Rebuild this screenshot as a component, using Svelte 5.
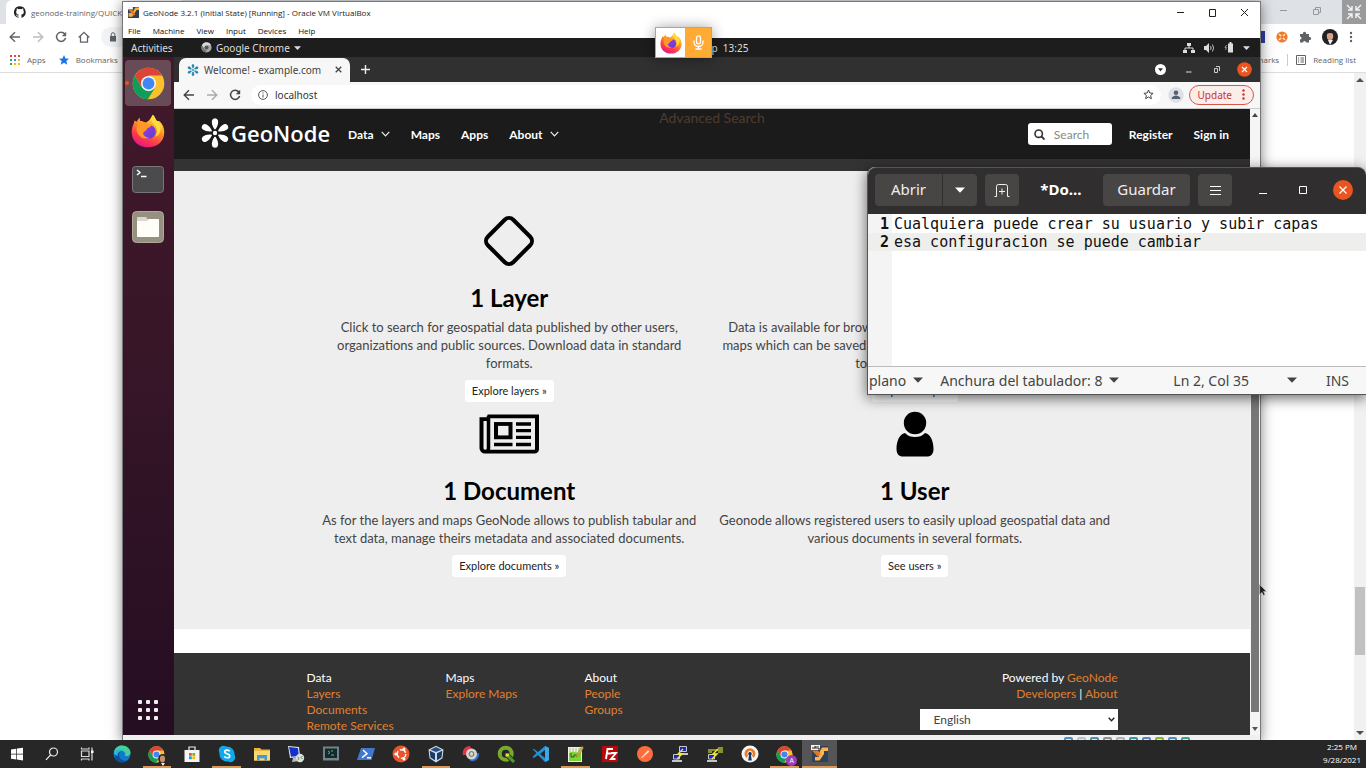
<script>
  const tasks = [
    { id: 'start', label: 'Start' },
    { id: 'search', label: 'Search' },
    { id: 'taskview', label: 'Task View' },
    { id: 'edge', label: 'Microsoft Edge' },
    { id: 'chromeuser', label: 'Google Chrome', running: true },
    { id: 'store', label: 'Microsoft Store' },
    { id: 'skype', label: 'Skype', running: true },
    { id: 'explorer', label: 'File Explorer' },
    { id: 'remote', label: 'Remote Desktop' },
    { id: 'monitor', label: 'Console' },
    { id: 'powershell', label: 'PowerShell' },
    { id: 'ubuntu', label: 'Ubuntu' },
    { id: 'vbox', label: 'VirtualBox', running: true },
    { id: 'sync', label: 'Disk sync' },
    { id: 'qgis', label: 'QGIS' },
    { id: 'code', label: 'Visual Studio Code' },
    { id: 'notepad', label: 'Notepad++', running: true },
    { id: 'filezilla', label: 'FileZilla' },
    { id: 'postman', label: 'Postman' },
    { id: 'putty', label: 'PuTTY' },
    { id: 'puttygen', label: 'PuTTYgen' },
    { id: 'openvpn', label: 'OpenVPN' },
    { id: 'chromea', label: 'Google Chrome, second profile', running: true },
    { id: 'vm', label: 'GeoNode 3.2.1', running: true, active: true }
  ];

  const features = [
    {
      icon: 'layer', title: '1 Layer', action: 'Explore layers »',
      text: 'Click to search for geospatial data published by other users, organizations and public sources. Download data in standard formats.'
    },
    {
      icon: 'map', title: '0 Maps', action: 'Explore maps »',
      text: 'Data is available for browsing, aggregating and styling to generate maps which can be saved, downloaded, shared publicly or restricted to specify users only.'
    },
    {
      icon: 'document', title: '1 Document', action: 'Explore documents »',
      text: 'As for the layers and maps GeoNode allows to publish tabular and text data, manage theirs metadata and associated documents.'
    },
    {
      icon: 'user', title: '1 User', action: 'See users »',
      text: 'Geonode allows registered users to easily upload geospatial data and various documents in several formats.'
    }
  ];

  const footerColumns = [
    { title: 'Data', links: ['Layers', 'Documents', 'Remote Services'] },
    { title: 'Maps', links: ['Explore Maps'] },
    { title: 'About', links: ['People', 'Groups'] }
  ];

  const lines = [
    'Cualquiera puede crear su usuario y subir capas',
    'esa configuracion se puede cambiar'
  ];
  const currentLine = 1;
  const petals = [0, 60, 120, 180, 240, 300];
  const appDots = ['#ea4335', '#ea4335', '#ea4335', '#34a853', '#4285f4', '#fbbc04', '#34a853', '#fbbc04', '#fbbc04'];
  const statusColors = ['#4d8fc4', '#b9c3cc', '#4a90a8', '#8d9297', '#aeb5bb', '#2f9aa6', '#5a83c9', '#7eb62e', '#4d8fc4', '#3ba08f'];
</script>

{#snippet chrome(size)}
  <svg width={size} height={size} viewBox="0 0 48 48" aria-hidden="true">
    <circle cx="24" cy="24" r="23" fill="#fbc02d" />
    <path d="M24 24 14 29.8 4.1 12.5A23 23 0 0 1 43.9 12.5H24z" fill="#dc4437" />
    <path d="M4.1 12.5 14 29.8 24 35.5 21.5 47A23 23 0 0 1 4.1 12.5z" fill="#109d58" />
    <path d="M14 29.8 24 35.5 33 31 23 47h-2A23 23 0 0 1 12 43z" fill="#109d58" />
    <circle cx="24" cy="24" r="11" fill="#f3f3f3" />
    <circle cx="24" cy="24" r="8.6" fill="#4385f4" />
  </svg>
{/snippet}

{#snippet firefox(size)}
  <svg width={size} height={size} viewBox="0 0 48 48" aria-hidden="true">
    <defs>
      <linearGradient id="ffbody" x1=".8" y1="0" x2=".3" y2="1">
        <stop offset="0" stop-color="#fff44f" /><stop offset=".4" stop-color="#ff9a1f" />
        <stop offset=".75" stop-color="#ff3750" /><stop offset="1" stop-color="#e31587" />
      </linearGradient>
      <linearGradient id="ffglobe" x1="0" y1="0" x2="1" y2="1">
        <stop offset="0" stop-color="#a238e0" /><stop offset="1" stop-color="#5a3fd0" />
      </linearGradient>
    </defs>
    <path d="M31 1c3 3 4 6 5 9 2 0 4-1 5 1 4 4 6 9 6 15 0 12-10 21-23 21S1 38 1 26c0-5 1-9 3-13l1-4 3 2 4-6 1 5c3 0 5 1 7 2 5-1 8-6 11-11z" fill="url(#ffbody)" />
    <circle cx="25" cy="25" r="10" fill="url(#ffglobe)" />
    <path d="M10 12c5-2 10-1 13 2l6 1c0 3-4 4-6 5-1 4-5 4-6 7 1 4 5 7 9 6-9 5-18-3-18-11 0-4 1-7 2-10z" fill="#ff9826" />
    <path d="M31 1c-5 6-2 10 2 14 5 5 5 12 1 17 7-2 9-9 7-15 2 2 3 4 3 7 2-9-10-14-13-23z" fill="#ffdd3a" />
  </svg>
{/snippet}

{#snippet star6(size, color)}
  <svg width={size} height={size} viewBox="0 0 30 30" aria-hidden="true">
    {#each petals as angle}
      <path d="M15 10.5C13 7.500 12.400 5 12.700 3 13 1.400 14 1 15 1s2 .4 2.300 2C17.600 5 17 7.500 15 10.500z" fill={color} stroke={color} stroke-width="1.600" stroke-linejoin="round" transform="rotate({angle} 15 15)" />
    {/each}
    <circle cx="15" cy="15" r="2.2" fill={color} />
  </svg>
{/snippet}

{#snippet arrow(direction, color)}
  <svg width="12" height="12" viewBox="0 0 12 12" fill="none" stroke={color} stroke-width="1.400" aria-hidden="true">
    {#if direction === 'back'}<path d="M11 6H1.500M6 1.200 1.200 6 6 10.800" />{:else}<path d="M1 6h9.500M6 1.200 10.800 6 6 10.800" />{/if}
  </svg>
{/snippet}

{#snippet reload(color)}
  <svg width="12" height="12" viewBox="0 0 12 12" aria-hidden="true">
    <path d="M9.800 3A4.600 4.600 0 1 0 10.600 7" fill="none" stroke={color} stroke-width="1.500" />
    <path d="M11.200.800v4.400H6.800z" fill={color} />
  </svg>
{/snippet}

{#snippet caret(color, width)}
  <svg {width} height="6" viewBox="0 0 10 6" aria-hidden="true"><path d="M0 .5h10L5 5.700z" fill={color} /></svg>
{/snippet}

{#snippet feature(name)}
  {#if name === 'layer'}
    <svg width="52" height="52" viewBox="0 0 52 52" aria-hidden="true">
      <rect x="8" y="8" width="36" height="36" rx="6" transform="rotate(45 26 26)" fill="none" stroke="#000" stroke-width="4" />
    </svg>
  {:else if name === 'map'}
    <svg width="52" height="52" viewBox="0 0 52 52" aria-hidden="true">
      <path d="M26 48C16 31 11 25 11 18a15 15 0 0 1 30 0c0 7-5 13-15 30zm0-23a7 7 0 1 0 0-14 7 7 0 0 0 0 14z" fill="#000" />
    </svg>
  {:else if name === 'document'}
    <svg width="60" height="42" viewBox="0 0 60 44" preserveAspectRatio="none" fill="none" stroke="#000" aria-hidden="true">
      <path d="M8.500 3.500H58V38a2.500 2.500 0 0 1-2.500 2.500H6A3.500 3.500 0 0 1 2.500 37V6.500h6" stroke-width="4" />
      <path d="M9.500 3v34a3.500 3.500 0 0 1-3.500 3.500" stroke-width="3.500" />
      <rect x="17" y="11.500" width="14.500" height="14" stroke-width="4" />
      <path d="M37 11.500h15M37 18.500h15M37 25.500h15M37 33h15M15 33h18.500" stroke-width="3.500" />
    </svg>
  {:else}
    <svg width="38" height="46" viewBox="0 0 38 46" aria-hidden="true">
      <circle cx="19" cy="12" r="11.200" />
      <path d="M9 22c3 3 6 4 10 4s7-1 10-4c6 1 8.500 9 8.500 16 0 5-2.500 7.500-6.500 7.500H7C3 45.500.500 43 .500 38 .500 31 3 23 9 22z" />
    </svg>
  {/if}
{/snippet}

{#snippet task(id)}
  {#if id === 'chromeuser' || id === 'chromea'}
    <span class="stack">
      {@render chrome(17)}
      {#if id === 'chromea'}<b class="badge">A</b>{:else}
        <svg class="mini" width="11" height="12" viewBox="0 0 11 12" aria-hidden="true"><path d="M1 12 2 8C0 3 2 0 6 0s5 3 3 8l2 4z" fill="#282425" /><ellipse cx="5.500" cy="5" rx="2.600" ry="3.400" fill="#c78f72" /><path d="m4 9 2 3 2-3z" fill="#eee" /></svg>
      {/if}
    </span>
  {:else}
    <svg width="18" height="18" viewBox="0 0 18 18" aria-hidden="true">
      {#if id === 'start'}
        <path d="M3 4.500 8.300 3.700v5H3zM9 3.600l6-.9v6H9zM3 9.400h5.300v5L3 13.700zM9 9.400h6v6l-6-.9z" fill="#fff" />
      {:else if id === 'search'}
        <circle cx="10.500" cy="7" r="4" fill="none" stroke="#eee" stroke-width="1.200" /><path d="m7.700 9.900-4.700 5" stroke="#eee" stroke-width="1.300" />
      {:else if id === 'taskview'}
        <path d="M3.500 6h7.500v5.500H3.500zM3.500 2.500v1.500H11V2.500M3.500 15.500V14H11v1.500M14 2.500v13" fill="none" stroke="#ddd" stroke-width="1.200" /><path d="M13 5.500h2.500V8H13z" fill="#fff" />
      {:else if id === 'edge'}
        <circle cx="9" cy="9" r="8.500" fill="#1179c9" />
        <path d="M1 7C2 2 6 .5 9 .5c5 0 8.500 3.500 8.500 7 0 3-3 4-5 3.500-1-.5-1-1 0-2C12 5 5 4 1 7z" fill="#45cf9a" />
        <path d="M7 7c-2 3-1 7 3 8.500 3 .6 5 0 6.500-2C13 18.500 5 19 2 13.500 1 9 4 6 7 7z" fill="#0c4f9b" />
        <path d="M1 7c3-3 8-3 9.500-1C8 5 4.500 7 4.500 11 2 10 .700 9 1 7z" fill="#2bb5d9" />
      {:else if id === 'store'}
        <path d="M1.500 5h15v12h-15z" fill="#f5f5f5" /><path d="M6 6V2h6v4" fill="none" stroke="#eee" stroke-width="1.200" />
        <path d="M6 8h2.800v2.800H6z" fill="#f25022" /><path d="M9.400 8h2.800v2.800H9.400z" fill="#7fba00" /><path d="M6 11.400h2.800v2.800H6z" fill="#00a4ef" /><path d="M9.400 11.400h2.800v2.800H9.400z" fill="#ffb900" />
      {:else if id === 'skype'}
        <circle cx="9" cy="9" r="7.600" fill="#11a8ea" /><circle cx="5.500" cy="5.500" r="4.700" fill="#11a8ea" /><circle cx="12.500" cy="12.500" r="4.700" fill="#11a8ea" />
        <path d="M11.700 6.300C10.800 4.700 6.700 4.600 6.700 6.900c0 2.400 5.100 1.500 5.100 4 0 2.400-4.500 2.300-5.500.5" fill="none" stroke="#fff" stroke-width="1.700" />
      {:else if id === 'explorer'}
        <path d="M1 3h6l1.500 1.500H17v11H1z" fill="#ecb53c" /><path d="M1 6h16v9.500H1z" fill="#fbd970" /><path d="M4 10h10v5.500h-2.500v-2.300h-5v2.300H4z" fill="#3f9bd8" />
      {:else if id === 'remote'}
        <path d="m1 1 11 1 1 10-10 1z" fill="#e6eaf0" /><path d="m2 2 9 1 .8 8L4 11.700z" fill="#1330c8" /><path d="m6 13 5-1 1 4-7 1z" fill="#b9bec4" /><circle cx="13" cy="13" r="4.200" fill="#dce1e0" /><path d="m10.500 12 1.700 1.500-1.700 1.500m5-4L14 12.500l1.500 1.500" stroke="#4a8a50" fill="none" />
      {:else if id === 'monitor'}
        <path d="M1 1.500h16v14H1z" fill="#75828a" /><path d="M3 3.500h12v9.500H3z" fill="#122a2d" /><path d="m6 6 2 1.500L6 9m3 1h3M9 6h2" stroke="#55bd7b" fill="none" />
      {:else if id === 'powershell'}
        <path d="M4 3h14l-3.500 12H0z" fill="#4178cc" /><path d="m6 5 4 3.700-5 4m5 0h4" stroke="#fff" stroke-width="1.500" fill="none" />
      {:else if id === 'ubuntu'}
        <circle cx="9" cy="9" r="8.500" fill="#e8542b" /><circle cx="9.500" cy="9" r="4.300" fill="none" stroke="#fff" stroke-width="1.500" stroke-dasharray="7 2" /><circle cx="3.800" cy="9" r="1.500" fill="#fff" /><circle cx="12" cy="4" r="1.500" fill="#fff" /><circle cx="12" cy="14" r="1.500" fill="#fff" />
      {:else if id === 'vbox'}
        <path d="m9 .7 7.500 3.700-1 8.800L9 17.500l-6.500-4.300-1-8.800z" fill="#c8dae8" /><path d="m9 2 5.500 2.700L9 7 3.500 4.700z" fill="#284d7c" /><path d="m2.700 5.800 5.300 2.500v7L3.500 12.500zM15.300 5.800 10 8.300v7l4.500-2.800z" fill="#183b68" />
      {:else if id === 'sync'}
        <path d="M1 10A7 7 0 0 1 8 1l2 4C7 5 5 7 5 10z" fill="#dc3745" /><path d="M17 8a7 7 0 0 1-9 8l1-3c4 1 5-1 5-5z" fill="#326fc7" /><circle cx="9.500" cy="9" r="5.500" fill="#d6d6d0" /><circle cx="9.500" cy="9" r="2.400" fill="none" stroke="#68655f" />
      {:else if id === 'qgis'}
        <circle cx="8.700" cy="8.700" r="6" fill="none" stroke="#77a92f" stroke-width="4" /><path d="m9 9 8 8" stroke="#27272a" stroke-width="5" /><path d="m10 10 7 7" stroke="#549331" stroke-width="3.200" /><path d="M8.500 8.500h4l-1 3h-3z" fill="#f4dd2c" />
      {:else if id === 'code'}
        <path d="m13 1 4 2v12l-4 2-7-7-4 3-1.500-1 4-4-4-4L2 4l4 3z" fill="#2392d5" /><path d="M13 5v8L8 9z" fill="#262628" /><path d="m13 1 4 2v12l-4 2z" fill="#3ba8ea" />
      {:else if id === 'notepad'}
        <path d="M2 2h14v15H2z" fill="#eff3df" /><path d="M3 8c5-3 8 1 12-1v9H3z" fill="#7bd532" /><path d="M3 4h12M3 6h12" stroke="#a4bd8e" stroke-dasharray="2 1" /><path d="m16 1-5 8-1 3 3-2 4.500-7z" fill="#d8ba43" stroke="#765e24" stroke-width=".5" /><path d="M5 8v4h3v-2h2" fill="none" stroke="#2e5724" />
      {:else if id === 'filezilla'}
        <path d="M1 1h16v16H1z" fill="#b80808" /><path d="M5 14 6.500 4H12M6 8.500h4.500M10 8h5l-5 6h4.500" fill="none" stroke="#fff" stroke-width="1.900" />
      {:else if id === 'postman'}
        <circle cx="9" cy="9" r="8" fill="#fb6d3c" /><path d="m5 13 7-8 1.500 1.500L6 13z" fill="#ffe0d0" />
      {:else if id === 'putty' || id === 'puttygen'}
        {#if id === 'putty'}<path d="M8.500 1.500h7v5h-7z" fill="#1627cc" stroke="#c9cad0" /><path d="M8 8h9v2H8z" fill="#c5c5c5" />{:else}<path d="M2 4h10V2h5v6h-5V6H6v2H2z" fill="#89912e" />{/if}
        <path d="M2.500 9.500h6v4.500h-6z" fill="#1627cc" stroke="#c9cad0" /><path d="M1 15h10v2H1z" fill="#c5c5c5" /><path d="m12 4-5 5h4l-5 5" fill="none" stroke="#f3ed2e" stroke-width="1.400" />
      {:else if id === 'openvpn'}
        <circle cx="9" cy="9" r="8.500" fill="#f6f6f4" /><path d="M5.500 13A5.500 5.500 0 1 1 12.500 13L11 10.500a2.700 2.700 0 1 0-4 0z" fill="#eb7b24" /><path d="M9 7a1.800 1.800 0 0 1 1 3.300l.8 5.200H7.200L8 10.300A1.800 1.800 0 0 1 9 7z" fill="#1c355d" />
      {:else}
        <path d="M1 1h16v16H1z" fill="#2d4258" /><path d="M4 15.500h4.500L13 9V6h4V2.500h-6L8 8v4H4z" fill="#ffb34a" /><path d="M1 5.500h6L9.500 9 7 12z" fill="#e57624" /><path d="M0 0h9v5H0z" fill="#f5f5f5" /><path d="M1 3h3V1M5 1v3M7 1v3h2" fill="none" stroke="#222" />
      {/if}
    </svg>
  {/if}
{/snippet}

<div class="desktop">
  <div class="workspace">
    <section class="host" aria-label="Host browser">
      <div class="host-tabs">
        <div class="host-tab">
          <svg width="12" height="12" viewBox="0 0 16 16" aria-hidden="true"><path d="M8 .2a8 8 0 0 0-2.500 15.600c.4.100.500-.200.500-.400v-1.500c-2.200.500-2.700-1-2.700-1-.4-.9-.9-1.200-.9-1.200-.7-.5.100-.5.100-.5.800.1 1.200.8 1.200.8.700 1.300 1.900.9 2.300.7.100-.5.300-.9.500-1.100-1.800-.2-3.600-.9-3.600-4 0-.9.300-1.600.8-2.100-.1-.200-.400-1 .1-2.100 0 0 .7-.2 2.200.8a7.600 7.600 0 0 1 4 0c1.500-1 2.200-.8 2.200-.8.400 1.100.2 1.900.1 2.100.500.500.800 1.200.800 2.100 0 3.100-1.900 3.700-3.700 3.900.300.300.600.800.600 1.500v2.200c0 .200.100.500.600.400A8 8 0 0 0 8 .2z" fill="#222" /></svg>
          <span>geonode-training/QUICKSTART</span>
        </div>
        <div class="host-controls">
          <button aria-label="Minimize"><svg width="9" height="9" viewBox="0 0 9 9"><path d="M1 4.500h7" stroke="#999" /></svg></button>
          <button aria-label="Restore"><svg width="9" height="9" viewBox="0 0 9 9" fill="none" stroke="#999"><path d="M1.500 3.500h5v5h-5zM3.500 3.500v-2h5v5h-2" /></svg></button>
          <button class="collapse" aria-label="Exit full screen"><svg width="16" height="16" viewBox="0 0 16 16" fill="none" stroke="#f4f4f4" stroke-width="1.400"><path d="m1 1 5 5M6 2v4H2M15 1l-5 5M10 2v4h4M1 15l5-5M2 10h4v4M15 15l-5-5M14 10h-4v4" /></svg></button>
        </div>
      </div>
      <div class="host-bar">
        <button aria-label="Back">{@render arrow('back', '#5f6368')}</button>
        <button aria-label="Forward">{@render arrow('forward', '#babcbe')}</button>
        <button aria-label="Reload">{@render reload('#5f6368')}</button>
        <button aria-label="Home"><svg width="12" height="12" viewBox="0 0 12 12" fill="none" stroke="#5f6368" stroke-width="1.300"><path d="M.700 6.500 6 1.300l5.300 5.200M2.500 5.500v5.700h7V5.500" /></svg></button>
        <div class="host-url"><svg width="8" height="10" viewBox="0 0 8 10" aria-hidden="true"><path d="M1 4h6v5.500H1z" fill="#5f6368" /><path d="M2.200 4V2.500a1.800 1.800 0 0 1 3.600 0V4" fill="none" stroke="#5f6368" /></svg></div>
        <div class="host-ext">
          <i class="blue"></i>
          <svg width="12" height="12" viewBox="0 0 12 12" aria-hidden="true"><circle cx="6" cy="6" r="5.600" fill="#f17b2c" /><path d="m3 3 6 6M9 3 3 9" stroke="#ffe3c8" stroke-width="1.500" /><circle cx="6" cy="6" r="1.500" fill="#f17b2c" /></svg>
          <svg width="12" height="12" viewBox="0 0 12 12" aria-hidden="true"><path d="M1 3h3a1.600 1.600 0 1 1 3 0h3v3a1.600 1.600 0 1 1 0 3v2.500H7a1.500 1.500 0 1 0-3 0H1V8.500a1.500 1.500 0 1 0 0-3z" fill="#5f6368" /></svg>
          <svg width="16" height="16" viewBox="0 0 16 16" aria-hidden="true"><circle cx="8" cy="8" r="8" fill="#242121" /><ellipse cx="8" cy="7" rx="3.200" ry="4.300" fill="#d3a38e" /><path d="M4.500 5C5 1 11 1 11.500 5 9 3.500 7 4 4.500 5z" fill="#2c1a18" /><path d="m6 11 2 5 3-5z" fill="#eee" /></svg>
          <svg width="4" height="12" viewBox="0 0 4 12" fill="#5f6368" aria-hidden="true"><circle cx="2" cy="2" r="1.200" /><circle cx="2" cy="6" r="1.200" /><circle cx="2" cy="10" r="1.200" /></svg>
        </div>
      </div>
      <div class="bookmarks">
        <svg width="10" height="10" viewBox="0 0 10 10" aria-hidden="true">{#each appDots as color, i}<rect x={(i % 3) * 4} y={Math.floor(i / 3) * 4} width="2" height="2" fill={color} />{/each}</svg>
        <a href="#apps">Apps</a>
        <svg class="bm-star" width="10" height="10" viewBox="0 0 10 10" aria-hidden="true"><path d="m5 0 1.500 3.400 3.500.3-2.700 2.400.9 3.600L5 7.800 1.800 9.700l.9-3.600L0 3.700l3.500-.3z" fill="#1a73e8" /></svg>
        <a href="#bookmarks">Bookmarks</a>
        <div class="bm-right">
          <a href="#other">Other bookmarks</a>
          <i></i>
          <svg width="10" height="10" viewBox="0 0 10 10" fill="none" stroke="#5f6368" aria-hidden="true"><path d="M.500.500h9v9h-9zM2 3h1.200M4.500 3H8M2 5h1.200M4.500 5H8M2 7h1.200M4.500 7H8" /></svg>
          <a href="#reading">Reading list</a>
        </div>
      </div>
      <div class="host-page">
        <div class="host-scroll">
          <svg width="8" height="5" viewBox="0 0 8 5" aria-hidden="true"><path d="M0 5h8L4 1z" fill="#505050" /></svg>
          <i></i>
          <svg width="8" height="5" viewBox="0 0 8 5" aria-hidden="true"><path d="M0 0h8L4 4z" fill="#505050" /></svg>
        </div>
      </div>
    </section>

    <section class="vm" aria-label="Virtual machine">
      <header class="vm-title">
        <svg width="11" height="11" viewBox="0 0 18 18" aria-hidden="true"><path d="M0 0h18v18H0z" fill="#2d4258" /><path d="M1 16h6l4-6 3-5h4V1h-6l-5 9H1z" fill="#ffab3e" /><path d="M1 5h6l5 8-3 1z" fill="#e57624" /><path d="M0 0h8v4H0z" fill="#f5f5f5" /></svg>
        <h1>GeoNode 3.2.1 (Initial State) [Running] - Oracle VM VirtualBox</h1>
        <div class="vm-controls">
          <button aria-label="Minimize"><svg width="9" height="9" viewBox="0 0 9 9"><path d="M1 4.500h7" stroke="#222" /></svg></button>
          <button aria-label="Maximize"><svg width="9" height="9" viewBox="0 0 9 9"><path d="M1.500 1.500h6v7h-6z" fill="none" stroke="#222" /></svg></button>
          <button aria-label="Close"><svg width="9" height="9" viewBox="0 0 9 9"><path d="m1 1 7 7M8 1 1 8" stroke="#222" /></svg></button>
        </div>
      </header>
      <nav class="vm-menu" aria-label="Machine menu">
        {#each ['File', 'Machine', 'View', 'Input', 'Devices', 'Help'] as item}<button>{item}</button>{/each}
      </nav>

      <div class="gnome">
        <button class="activities">Activities</button>
        <button class="app-menu">
          <svg width="11" height="11" viewBox="0 0 12 12" aria-hidden="true"><circle cx="6" cy="6" r="5.500" fill="#aaa" /><path d="M6 6 3.500 7.500 1 3.500A5.500 5.500 0 0 1 11 3.500H6z" fill="#d8d8d8" /><path d="M1 3.500 4 8l2 1-.5 2.500A5.500 5.500 0 0 1 1 3.500z" fill="#777" /><circle cx="6" cy="6" r="2.300" fill="#555" /></svg>
          <span>Google Chrome</span>{@render caret('#ddd', 7)}
        </button>
        <time>28 de sep&nbsp; 13:25</time>
        <div class="tray">
          <svg width="12" height="10" viewBox="0 0 12 10" fill="#ddd" aria-hidden="true"><path d="M4 0h4v3H4zM0 7h4v3H0zM8 7h4v3H8z" /><path d="M6 3v2M2 7V5h8v2" fill="none" stroke="#ddd" /></svg>
          <svg width="11" height="10" viewBox="0 0 11 10" aria-hidden="true"><path d="M0 3h2l3-3v10L2 7H0z" fill="#ddd" /><path d="M6.500 3q1.200 2 0 4M8.500 1.500q2 3.500 0 7" fill="none" stroke="#bbb" /></svg>
          <svg width="10" height="11" viewBox="0 0 10 11" aria-hidden="true"><path d="M4 1.500h5v9H4z" fill="#ddd" /><path d="M5.500 0h2v2h-2z" fill="#ddd" /><path d="M2.500 3 1 5.500h1.500L1.500 8" fill="none" stroke="#999" /></svg>
          {@render caret('#ddd', 7)}
        </div>
      </div>

      <div class="guest">
        <aside class="dock" aria-label="Dock">
          <button class="current" aria-label="Google Chrome">{@render chrome(33)}</button>
          <button aria-label="Firefox">{@render firefox(34)}</button>
          <button aria-label="Terminal"><svg width="32" height="27" viewBox="0 0 32 27"><rect x=".5" y=".5" width="31" height="26" rx="3" fill="#4b4b4d" stroke="#777" /><path d="m5 4 3 2.500L5 9M9 10.500h5.500" fill="none" stroke="#fff" stroke-width="1.400" /></svg></button>
          <button aria-label="Files"><svg width="32" height="32" viewBox="0 0 32 32"><rect x=".5" y=".5" width="31" height="31" rx="4" fill="#969080" stroke="#b0aa9b" /><path d="M5 7q0-1 1-1h8l1.500 2H26q1 0 1 1v16q0 1-1 1H6q-1 0-1-1z" fill="#dbd6cf" /><path d="M5 10h10l2-2h9q1 0 1 1v16q0 1-1 1H6q-1 0-1-1z" fill="#fffdf8" /></svg></button>
          <button class="apps" aria-label="Show applications"><svg width="22" height="22" viewBox="0 0 22 22" fill="#f2eff1">{#each Array(9) as _, i}<rect x={(i % 3) * 8 + 1} y={Math.floor(i / 3) * 8 + 1} width="4" height="4" rx="1" />{/each}</svg></button>
        </aside>

        <div class="browser">
          <div class="tabs">
            <div class="tab">
              {@render star6(12, '#1f83ab')}
              <span>Welcome! - example.com</span>
              <button aria-label="Close tab"><svg width="7" height="7" viewBox="0 0 7 7"><path d="m.700.700 5.600 5.600M6.300.700.700 6.300" stroke="#444" stroke-width="1.300" /></svg></button>
            </div>
            <button class="newtab" aria-label="New tab"><svg width="9" height="9" viewBox="0 0 9 9"><path d="M4.500 0v9M0 4.500h9" stroke="#eee" stroke-width="1.400" /></svg></button>
            <div class="tab-controls">
              <button aria-label="Search tabs"><svg width="11" height="11" viewBox="0 0 11 11"><circle cx="5.500" cy="5.500" r="5.500" fill="#fff" /><path d="M3 4.200h5L5.500 7.500z" fill="#333" /></svg></button>
              <button aria-label="Minimize"><svg width="7" height="7" viewBox="0 0 7 7"><path d="M1 6h5.500" stroke="#ddd" /></svg></button>
              <button aria-label="Restore"><svg width="7" height="7" viewBox="0 0 7 7" fill="none" stroke="#ccc"><path d="M1.500 2.500h3v4h-3zM3 .500h3.500V5" /></svg></button>
              <button aria-label="Close"><svg width="15" height="15" viewBox="0 0 15 15"><circle cx="7.500" cy="7.500" r="7.300" fill="#e95420" /><path d="m5 5 5 5M10 5l-5 5" stroke="#fff" stroke-width="1.200" /></svg></button>
            </div>
          </div>
          <div class="toolbar">
            <button aria-label="Back">{@render arrow('back', '#444')}</button>
            <button aria-label="Forward">{@render arrow('forward', '#aaa')}</button>
            <button aria-label="Reload">{@render reload('#444')}</button>
            <div class="url">
              <svg width="10" height="10" viewBox="0 0 10 10" aria-hidden="true"><circle cx="5" cy="5" r="4.400" fill="none" stroke="#555" /><path d="M5 4.500v3M5 2.300v1.200" stroke="#555" /></svg>
              <input aria-label="Address" value="localhost" />
              <svg width="11" height="11" viewBox="0 0 11 11" aria-hidden="true"><path d="m5.500 1 1.300 3 3.300.3-2.500 2.200.8 3.200-2.900-1.700-2.900 1.700.8-3.200L.900 4.300 4.200 4z" fill="none" stroke="#444" /></svg>
            </div>
            <button class="profile" aria-label="Profile"><svg width="16" height="16" viewBox="0 0 16 16"><circle cx="8" cy="8" r="7.800" fill="#dde0e8" /><circle cx="8" cy="5.700" r="2.300" fill="#55606e" /><path d="M3.800 12V10.500q2-2 4.200-2t4.200 2V12z" fill="#55606e" /></svg></button>
            <button class="update">Update <svg width="3" height="11" viewBox="0 0 3 11" fill="#c5352b" aria-hidden="true"><circle cx="1.500" cy="1.500" r="1.200" /><circle cx="1.500" cy="5.500" r="1.200" /><circle cx="1.500" cy="9.500" r="1.200" /></svg></button>
          </div>

          <div class="viewport">
            <main>
              <nav class="navbar" aria-label="GeoNode">
                <a class="brand" href="#home">{@render star6(30, '#fff')}<span>GeoNode</span></a>
                <a href="#data">Data <svg width="9" height="6" viewBox="0 0 9 6" aria-hidden="true"><path d="m.7.8 3.800 4L8.300.8" fill="none" stroke="#eee" stroke-width="1.200" /></svg></a>
                <a href="#maps">Maps</a>
                <a href="#geoapps">Apps</a>
                <a href="#about">About <svg width="9" height="6" viewBox="0 0 9 6" aria-hidden="true"><path d="m.7.8 3.800 4L8.300.8" fill="none" stroke="#eee" stroke-width="1.200" /></svg></a>
                <a class="advanced" href="#advanced">Advanced Search</a>
                <label class="search">
                  <svg width="11" height="11" viewBox="0 0 11 11" aria-hidden="true"><circle cx="4.700" cy="4.700" r="3.700" fill="none" stroke="#333" stroke-width="1.600" /><path d="m7.500 7.500 3 3" stroke="#333" stroke-width="1.800" /></svg>
                  <input aria-label="Search" placeholder="Search" />
                </label>
                <a href="#register">Register</a>
                <a href="#signin">Sign in</a>
              </nav>
              <div class="strip"></div>
              <section class="features">
                <div class="grid">
                  {#each features as item}
                    <article>
                      <div class="art">{@render feature(item.icon)}</div>
                      <h2>{item.title}</h2>
                      <p>{item.text}</p>
                      <a class="btn" href="#{item.icon}">{item.action}</a>
                    </article>
                  {/each}
                </div>
              </section>
              <footer>
                <div class="foot">
                  {#each footerColumns as column}
                    <ul>
                      <li>{column.title}</li>
                      {#each column.links as link}<li><a href="#{link}">{link}</a></li>{/each}
                    </ul>
                  {/each}
                  <div class="powered">
                    <span>Powered by <a href="#geonode">GeoNode</a></span>
                    <span><a href="#developers">Developers</a> | <a href="#about-us">About</a></span>
                    <div class="language">
                      <select aria-label="Language"><option>English</option><option>Español</option></select>
                      <svg width="7" height="5" viewBox="0 0 7 5" aria-hidden="true"><path d="m.7.7 2.800 3 2.800-3" fill="none" stroke="#222" stroke-width="1.400" /></svg>
                    </div>
                  </div>
                </div>
              </footer>
            </main>
            <div class="page-scroll">
              <svg width="6" height="4" viewBox="0 0 6 4" aria-hidden="true"><path d="M0 4h6L3 0z" fill="#444" /></svg>
              <i></i>
              <svg width="6" height="4" viewBox="0 0 6 4" aria-hidden="true"><path d="M0 0h6L3 4z" fill="#555" /></svg>
            </div>
          </div>
        </div>
      </div>
      <div class="vm-status">
        {#each statusColors as color}<i style:border-color={color}></i>{/each}
      </div>
    </section>

    <div class="share">
      <span class="share-app">{@render firefox(22)}</span>
      <button aria-label="Microphone"><svg width="11" height="15" viewBox="0 0 11 15" fill="none" stroke="#fff" stroke-width="1.300"><rect x="3.500" y=".8" width="4" height="8" rx="2" /><path d="M1 5.500V7a4.500 4.500 0 0 0 9 0V5.500M5.500 11.500V14M2.500 14h6" /></svg></button>
    </div>

    <section class="editor" aria-label="Text editor">
      <header>
        <div class="open">
          <button class="abrir">Abrir</button>
          <button class="square" aria-label="Recientes">{@render caret('#fff', 10)}</button>
        </div>
        <button class="square" aria-label="Documento nuevo"><svg width="16" height="13" viewBox="0 0 16 13" fill="none" stroke="#f2f2f2"><path d="M.500 12.500h2v-10q0-2 2-2h7q2 0 2 2v10h2M8 4.500v6M5 7.500h6" /></svg></button>
        <h2>*Do…</h2>
        <button class="guardar">Guardar</button>
        <button class="square" aria-label="Menú"><svg width="11" height="11" viewBox="0 0 11 11"><path d="M0 1.500h11M0 5.500h11M0 9.500h11" stroke="#fff" /></svg></button>
        <div class="ed-controls">
          <button aria-label="Minimizar"><svg width="10" height="10" viewBox="0 0 10 10"><path d="M1 8.500h8" stroke="#fff" /></svg></button>
          <button aria-label="Maximizar"><svg width="10" height="10" viewBox="0 0 10 10"><path d="M1.500 1.500h7v7h-7z" fill="none" stroke="#fff" /></svg></button>
          <button aria-label="Cerrar"><svg width="20" height="20" viewBox="0 0 20 20"><circle cx="10" cy="10" r="10" fill="#e95420" /><path d="m6.500 6.500 7 7M13.500 6.500l-7 7" stroke="#fff" stroke-width="1.300" /></svg></button>
        </div>
      </header>
      <div class="text">
        {#each lines as line, i}
          <div class="line" class:on={i === currentLine}><b>{i + 1}</b><span>{line}</span></div>
        {/each}
      </div>
      <div class="ed-status">
        <button class="lang">plano {@render caret('#444', 10)}</button>
        <button class="tabw">Anchura del tabulador: 8 {@render caret('#444', 10)}</button>
        <button class="pos">Ln 2, Col 35 {@render caret('#444', 10)}</button>
        <span>INS</span>
      </div>
    </section>

    <svg class="cursor" width="8" height="12" viewBox="0 0 8 12" aria-hidden="true"><path d="M.500.500v10l2.500-2 1.500 3 1.500-1-1.500-3H7.500z" fill="#222" stroke="#ccc" stroke-width=".5" /></svg>
  </div>

  <footer class="taskbar">
    <div class="tasks">
      {#each tasks as item}
        <button class:running={item.running} class:active={item.active} aria-label={item.label}>{@render task(item.id)}</button>
      {/each}
    </div>
    <time><span>2:25 PM</span><span>9/28/2021</span></time>
  </footer>
</div>

<style>
  :global(body) { margin: 0; }
  * { box-sizing: border-box; }
  svg { display: block; flex: none; }
  button { display: inline-flex; align-items: center; justify-content: center; border: 0; padding: 0; background: none; color: inherit; font: inherit; white-space: nowrap; }
  input, select { border: 0; background: none; font: inherit; color: inherit; padding: 0; min-width: 0; outline: 0; }
  a { color: inherit; text-decoration: none; }
  h1, h2, p, ul { margin: 0; padding: 0; font-weight: 400; }
  li { list-style: none; }

  .desktop { height: 100vh; display: flex; flex-direction: column; overflow: hidden; font-family: "Open Sans", sans-serif; font-size: 8px; background: #fff; }
  .workspace { flex: 1; min-height: 0; position: relative; overflow: hidden; }

  .host { height: 100%; display: flex; flex-direction: column; color: #5f6368; }
  .host-tabs { height: 24px; display: flex; background: #dee1e6; padding-left: 6px; }
  .host-tab { width: 180px; display: flex; align-items: center; gap: 5px; padding-left: 8px; background: #fff; border-radius: 6px 6px 0 0; white-space: nowrap; overflow: hidden; }
  .host-controls { margin-left: auto; display: flex; align-items: stretch; }
  .host-controls button { width: 33px; padding-bottom: 4px; }
  .host-controls .collapse { width: 24px; background: #999b9d; padding: 0; margin-left: 9px; }
  .host-bar { height: 26px; display: flex; align-items: center; gap: 11px; padding: 0 13px 0 9px; }
  .host-url { flex: 1; height: 20px; border-radius: 10px; background: #f1f3f4; display: flex; align-items: center; padding-left: 8px; margin-right: 80px; }
  .host-ext { display: flex; align-items: center; gap: 11px; }
  .host-ext .blue { width: 8px; height: 12px; background: #303f9f; }
  .bookmarks { height: 22px; display: flex; align-items: center; padding: 0 10px 3px; }
  .bookmarks a { margin-left: 7px; }
  .bm-star { margin-left: 13px; }
  .bm-right { margin-left: auto; display: flex; align-items: center; }
  .bm-right i { width: 1px; height: 12px; background: #ccc; margin: 0 8px; }
  .host-page { flex: 1; display: flex; justify-content: flex-end; border-top: 1px solid #ddd; }
  .host-scroll { width: 12px; background: #f1f1f1; display: flex; flex-direction: column; align-items: center; padding: 4px 0; }
  .host-scroll i { width: 10px; height: 68px; background: #c1c1c1; margin: auto 0 76px; }

  .vm { position: absolute; left: 122px; right: 105px; top: 1px; bottom: 0; display: flex; flex-direction: column; background: #fff; border: 1px solid #777; border-bottom: 0; box-shadow: 0 2px 12px rgba(0, 0, 0, .5); }
  .vm-title { height: 21px; display: flex; align-items: center; gap: 4px; padding-left: 5px; }
  .vm-title h1 { font-size: 8px; color: #222; }
  .vm-controls { margin-left: auto; display: flex; }
  .vm-controls button { width: 32px; }
  .vm-menu { height: 15px; display: flex; align-items: center; gap: 12px; padding-left: 5px; color: #111; }

  .gnome { height: 19px; flex: none; background: #1d1d1d; color: #ddd; display: grid; grid-template-columns: 1fr auto 1fr; align-items: center; font-family: "Noto Sans", sans-serif; font-size: 10px; position: relative; }
  .activities { justify-self: start; padding-left: 8px; }
  .app-menu { position: absolute; left: 78px; gap: 4px; }
  .gnome time { grid-column: 2; margin-left: 38px; }
  .tray { justify-self: end; display: flex; align-items: center; gap: 9px; padding-right: 10px; }

  .guest { flex: 1; min-height: 0; display: flex; }
  .dock { width: 51px; flex: none; display: flex; flex-direction: column; align-items: center; padding: 3px 1px 14px 0; gap: 2px; background: linear-gradient(#42192b, #351527 50%, #250d22); }
  .dock button { width: 46px; height: 46px; border-radius: 4px; position: relative; }
  .dock .current { background: #684b57; }
  .dock .current::before { content: ""; position: absolute; left: 0; width: 4px; height: 4px; border-radius: 50%; background: #e95420; }
  .dock .apps { margin-top: auto; height: 22px; }

  .browser { flex: 1; min-width: 0; display: flex; flex-direction: column; }
  .tabs { height: 25px; flex: none; display: flex; align-items: stretch; background: #303030; padding-left: 5px; font-family: "Noto Sans", sans-serif; }
  .tab { width: 171px; display: flex; align-items: center; gap: 5px; padding: 0 8px 1px; background: #f7f7f7; border-radius: 7px 7px 0 0; margin-top: 1px; color: #444; font-size: 10px; white-space: nowrap; }
  .tab button { margin-left: auto; }
  .newtab { width: 31px; }
  .tab-controls { margin-left: auto; display: flex; align-items: center; padding-right: 2px; }
  .tab-controls button { width: 28px; }
  .toolbar { height: 27px; flex: none; display: flex; align-items: center; gap: 11px; padding: 0 6px 1px 9px; background: #f7f7f7; border-bottom: 1px solid #ccc; font-family: "Noto Sans", sans-serif; font-size: 10px; color: #333; }
  .url { flex: 1; height: 20px; display: flex; align-items: center; gap: 7px; background: #fff; border-radius: 10px; padding: 0 7px; margin-left: -1px; margin-right: -4px; }
  .url input { flex: 1; }
  .update { height: 20px; border: 1px solid #d8554c; border-radius: 10px; background: #fcecea; color: #c5352b; padding: 0 8px; gap: 10px; font-size: 10px; }
  .profile { margin-right: -6px; }

  .viewport { flex: 1; min-height: 0; display: flex; overflow: hidden; }
  main { flex: 1; min-width: 0; display: flex; flex-direction: column; font-family: Lato, sans-serif; }
  .navbar { height: 50px; flex: none; display: flex; align-items: center; background: #1b1b1b; color: #fff; font-size: 12px; font-weight: 700; padding: 0 21px 0 26px; gap: 21px; position: relative; }
  .navbar a { display: flex; align-items: center; gap: 7px; white-space: nowrap; }
  .navbar .brand { gap: 1px; margin-right: -3px; padding-bottom: 3px; font-size: 22px; font-weight: 600; font-family: "Open Sans", sans-serif; }
  .navbar .advanced { position: absolute; left: 50%; top: 0; transform: translateX(-50%); color: #4f3b2e; font-weight: 400; font-size: 14px; }
  .search { margin-left: auto; width: 84px; height: 22px; display: flex; align-items: center; gap: 9px; padding: 0 6px; background: #fff; border-radius: 3px; font-weight: 400; margin-right: -4px; }
  .search input { flex: 1; width: 0; }
  .search input::placeholder { color: #888; opacity: 1; }
  .strip { height: 12px; flex: none; background: #333; }
  .features { height: 458px; flex: none; background: #eee; padding-top: 40px; margin-bottom: 24px; }
  .grid { display: grid; grid-template-columns: 1fr 1fr; max-width: 811px; margin: 0 auto; row-gap: 2px; }
  article { display: flex; flex-direction: column; align-items: center; text-align: center; }
  .art { height: 60px; display: flex; align-items: center; }
  article h2 { margin-top: 12px; font-size: 24px; line-height: 30px; font-weight: 700; color: #000; }
  article p { margin-top: 5px; max-width: 393px; font-size: 13px; line-height: 18px; color: #444; }
  .btn { margin-top: 8px; height: 22px; line-height: 22px; padding: 0 7px; font-size: 11px; background: #fff; color: #222; border-radius: 3px; }
  main footer { flex: 1; background: #333; color: #fff; font-size: 12px; line-height: 16px; padding-top: 17px; }
  .foot { max-width: 811px; margin: 0 auto; display: flex; }
  .foot ul { width: 139px; }
  .foot a { color: #e0812f; }
  .powered { margin-left: auto; display: flex; flex-direction: column; align-items: flex-end; }
  .language { position: relative; width: 198px; height: 21px; margin-top: 7px; background: #fff; color: #444; }
  .language select { width: 100%; height: 100%; padding-left: 14px; appearance: none; }
  .language svg { position: absolute; right: 3px; top: 8px; pointer-events: none; }
  .page-scroll { width: 10px; flex: none; display: flex; flex-direction: column; align-items: center; background: #f5f5f5; padding: 4px 0; }
  .page-scroll i { width: 8px; flex: 1; background: #777; margin: 90px 0 15px; }
  .vm-status { height: 5px; flex: none; display: flex; justify-content: flex-end; gap: 4px; padding: 2px 70px 0 0; background: #f0f0f0; overflow: hidden; }
  .vm-status i { width: 9px; height: 8px; border: 2px solid; border-radius: 2px; background: #dfe8ee; }

  .share { position: absolute; left: 655px; top: 27px; display: flex; border: 1px solid #f39a1f; background: #ffab33; box-shadow: 0 1px 14px rgba(0, 0, 0, .4); }
  .share-app { width: 29px; height: 29px; display: grid; place-items: center; background: #fff; }
  .share button { width: 26px; }

  .editor { position: absolute; right: 0; top: 167px; width: 499px; border: 1px solid #555; border-width: 0 0 1px 1px; border-radius: 8px 8px 0 0; background: #fff; box-shadow: 0 3px 14px rgba(0, 0, 0, .6); font-family: "Noto Sans", sans-serif; font-size: 15px; }
  .editor header { height: 47px; display: flex; align-items: center; padding: 0 13px 2px 7px; background: #302e2f; border-top: 1px solid #555; border-radius: 8px 8px 0 0; color: #eee; }
  .editor header button { height: 32px; }
  .abrir, .guardar { padding-bottom: 2px; }
  .editor .square, .abrir, .guardar { background: #484645; border-radius: 4px; }
  .editor .square { width: 34px; }
  .open { display: flex; gap: 1px; margin-right: 8px; }
  .open .abrir { width: 67px; border-radius: 4px 0 0 4px; }
  .open .square { border-radius: 0 4px 4px 0; }
  .editor h2 { flex: 1; text-align: center; font-size: 15px; font-weight: 700; color: #fff; padding-bottom: 2px; }
  .guardar { width: 87px; margin-right: 8px; }
  .ed-controls { display: flex; gap: 20px; margin-left: 21px; }
  .ed-controls button { width: 20px; }
  .text { height: 152px; padding-top: 1px; background: linear-gradient(90deg, #f4f4f4 24px, #fff 24px); font-family: "DejaVu Sans Mono", monospace; font-size: 15px; line-height: 18px; color: #111; }
  .line { display: flex; gap: 5px; white-space: pre; }
  .line.on { background: #eeeeec; }
  .line b { width: 21px; text-align: right; }
  .ed-status { height: 28px; display: flex; align-items: center; border-top: 1px solid #bbb; background: #f7f7f7; color: #444; padding: 0 17px 1px 1px; font-size: 14px; }
  .ed-status button { gap: 7px; }
  .ed-status .lang { margin-right: 17px; }
  .ed-status .pos { margin-left: auto; gap: 38px; margin-right: 29px; }
  .cursor { position: absolute; left: 1259px; top: 584px; }

  .taskbar { height: 28px; flex: none; display: flex; justify-content: space-between; background: #272728; color: #fff; }
  .tasks { flex: 1; max-width: 837px; display: grid; grid-template-columns: repeat(24, 1fr); }
  .tasks button { position: relative; }
  .tasks .active { background: #555456; }
  .tasks .running::after { content: ""; position: absolute; left: 3px; right: 3px; bottom: 0; height: 2px; background: #dc9656; }
  .tasks .active::after { left: 0; right: 0; }
  .stack { position: relative; display: block; }
  .badge { position: absolute; right: -4px; bottom: -3px; width: 11px; height: 11px; border-radius: 50%; background: #9a3fb5; color: #fff; font-size: 7px; line-height: 11px; font-weight: 400; }
  .stack .mini { position: absolute; right: -3px; bottom: -3px; }
  .taskbar time { display: flex; flex-direction: column; align-items: center; padding-right: 5px; line-height: 13px; }
</style>
